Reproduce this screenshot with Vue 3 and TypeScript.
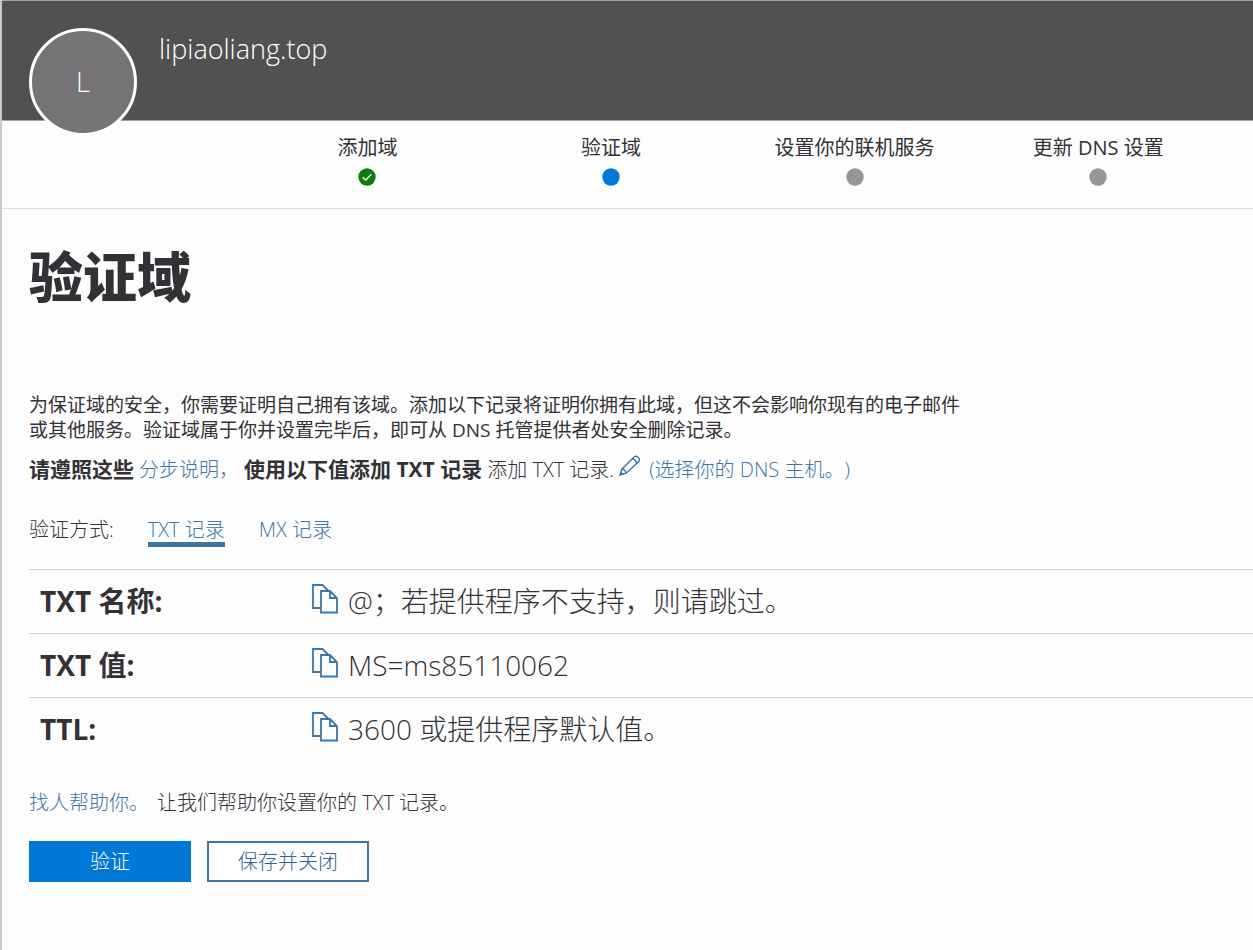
<script setup lang="ts">
import { ref } from 'vue'

interface Step {
  label: string
  state: 'done' | 'current' | 'todo'
}

interface DnsRow {
  label: string
  value: string
}

const steps: Step[] = [
  { label: '添加域', state: 'done' },
  { label: '验证域', state: 'current' },
  { label: '设置你的联机服务', state: 'todo' },
  { label: '更新 DNS 设置', state: 'todo' },
]

const methods = ['TXT 记录', 'MX 记录']
const method = ref(methods[0])

const rows: DnsRow[] = [
  { label: 'TXT 名称:', value: '@；若提供程序不支持，则请跳过。' },
  { label: 'TXT 值:', value: 'MS=ms85110062' },
  { label: 'TTL:', value: '3600 或提供程序默认值。' },
]

function copy(value: string) {
  navigator.clipboard?.writeText(value)
}
</script>

<template>
  <div class="page">
    <header class="banner">
      <div class="avatar">L</div>
      <div class="domain">lipiaoliang.top</div>
    </header>

    <ol class="steps">
      <li v-for="step in steps" :key="step.label" class="step">
        <span>{{ step.label }}</span>
        <svg class="dot" :class="step.state" viewBox="0 0 18 18" aria-hidden="true">
          <circle cx="9" cy="9" r="8.7" />
          <path v-if="step.state === 'done'" d="M4.8 9.2 7.7 12 13.4 6.2" />
        </svg>
      </li>
    </ol>

    <main class="content">
      <h1>验证域</h1>

      <p class="intro">
        为保证域的安全，你需要证明自己拥有该域。添加以下记录将证明你拥有此域，但这不会影响你现有的电子邮件或其他服务。验证域属于你并设置完毕后，即可从 DNS 托管提供者处安全删除记录。
      </p>

      <p class="guide">
        <strong>请遵照这些</strong>
        <a href="#steps">分步说明，</a>
        <strong>使用以下值添加 TXT 记录</strong>
        <span>添加 TXT 记录.</span>
        <a href="#host" class="host">
          <svg class="pencil" viewBox="0 0 22 22" aria-hidden="true">
            <path d="M1.2 19.8 3 14 15.4 1.800Q17 .6 18.800 2L19.800 3.100Q21.200 4.800 19.800 6.400L7.200 18.200ZM3 14Q6.400 14.500 7.200 18.200M13.400 3.800Q17 4.600 17.700 8.300" />
            <path class="tip" d="M1.200 19.800 1.900 17.400 3.800 19.100Z" />
          </svg>
          <span>(选择你的 DNS 主机。)</span>
        </a>
      </p>

      <div class="methods">
        <span id="method-label">验证方式:</span>
        <div class="tabs" role="tablist" aria-labelledby="method-label">
          <button
            v-for="item in methods"
            :key="item"
            type="button"
            role="tab"
            class="tab"
            :class="{ active: item === method }"
            :aria-selected="item === method"
            @click="method = item"
          >{{ item }}</button>
        </div>
      </div>

      <table class="records">
        <tbody>
          <tr v-for="row in rows" :key="row.label">
            <th scope="row">{{ row.label }}</th>
            <td>
              <div class="value">
                <button type="button" class="copy" :aria-label="'复制 ' + row.label" @click="copy(row.value)">
                  <svg viewBox="0 0 26 30" aria-hidden="true">
                    <path d="M8 24H1V1H10.500L16 6.500" />
                    <path d="M9 7H18L25 14V28.500H9ZM18 7V14H25" />
                  </svg>
                </button>
                <span>{{ row.value }}</span>
              </div>
            </td>
          </tr>
        </tbody>
      </table>

      <p class="help">
        <a href="#help">找人帮助你。</a>
        <span>让我们帮助你设置你的 TXT 记录。</span>
      </p>

      <div class="actions">
        <button type="button" class="btn primary">验证</button>
        <button type="button" class="btn">保存并关闭</button>
      </div>
    </main>
  </div>
</template>

<style>
body {
  margin: 0;
  background: #fefdfe;
}
</style>

<style scoped>
.page {
  box-sizing: border-box;
  min-height: 100vh;
  border-left: 2px solid #c9c8cb;
  font-family: "Open Sans", "Noto Sans CJK SC", sans-serif;
  font-size: 20px;
  font-weight: 300;
  line-height: 28px;
  text-spacing-trim: space-all;
  color: #333135;
}

a {
  color: #3a76a6;
  text-decoration: none;
}

button {
  font: inherit;
  cursor: pointer;
}

.banner {
  box-sizing: border-box;
  display: flex;
  gap: 22px;
  height: 121px;
  padding: 27px 27px 0;
  border-top: 1px solid #a2a1a3;
  border-bottom: 1px solid #a19fa2;
  background: #525053;
  color: #fff;
}

.avatar {
  box-sizing: border-box;
  display: flex;
  flex: none;
  align-items: center;
  justify-content: center;
  width: 108px;
  height: 108px;
  border: 3px solid #fff;
  border-radius: 50%;
  background: #757376;
  font-size: 27px;
}

.domain {
  font-size: 27px;
  line-height: 42px;
}

.steps {
  display: grid;
  grid-template-columns: repeat(5, 1fr);
  margin: 0;
  padding: 13px 33px 22px 0;
  border-bottom: 1px solid #e0dfe2;
  list-style: none;
  font-weight: 400;
}

.step {
  display: flex;
  flex-direction: column;
  align-items: center;
  gap: 6px;
  white-space: nowrap;
}

.step:first-child {
  grid-column-start: 2;
}

.dot {
  width: 18px;
  height: 18px;
  fill: #979598;
}

.dot.done {
  fill: #107c10;
}

.dot.current {
  fill: #0078d7;
}

.dot path {
  fill: none;
  stroke: #fff;
  stroke-width: 1.3;
}

.content {
  padding: 32px 0 32px 27px;
}

h1 {
  margin: 0 0 80px;
  font-size: 54px;
  font-weight: 800;
  line-height: 72px;
}

p {
  margin: 0;
}

.intro {
  max-width: 940px;
  font-size: 19px;
  font-weight: 400;
  line-height: 25px;
}

.guide {
  display: flex;
  flex-wrap: wrap;
  align-items: baseline;
  gap: 5px;
  margin-top: 12px;
}

.guide strong {
  font-size: 21px;
  font-weight: 700;
}

.host {
  display: flex;
  align-items: baseline;
  gap: 8px;
}

.pencil {
  width: 22px;
  height: 22px;
  fill: none;
  stroke: #3a76a6;
  stroke-width: 1.4;
}

.pencil .tip {
  fill: #3a76a6;
}

.methods {
  display: flex;
  align-items: baseline;
  gap: 34px;
  margin-top: 32px;
}

.tabs {
  display: flex;
  gap: 34px;
}

.tab {
  padding: 0;
  border: 0;
  border-bottom: 5px solid transparent;
  background: none;
  color: #3a76a6;
  line-height: 24px;
}

.tab.active {
  border-bottom-color: #3a76a6;
}

.records {
  width: 100%;
  margin-top: 22px;
  border-collapse: collapse;
  font-size: 28px;
  line-height: 39px;
}

.records tr {
  border-top: 1px solid #d2d1d4;
}

.records th {
  width: 272px;
  padding: 12px 0 12px 11px;
  font-weight: 700;
  text-align: left;
}

.records td {
  padding: 12px 0;
}

.value {
  display: flex;
  align-items: center;
  gap: 10px;
}

.copy {
  display: block;
  width: 26px;
  height: 36px;
  padding: 0 0 6px;
  border: 0;
  background: none;
}

.copy svg {
  display: block;
  width: 26px;
  height: 30px;
  fill: none;
  stroke: #3a76a6;
  stroke-width: 1.8;
}

.help {
  display: flex;
  gap: 8px;
  margin-top: 28px;
}

.actions {
  display: flex;
  gap: 16px;
  margin-top: 24px;
}

.btn {
  box-sizing: border-box;
  min-width: 162px;
  height: 41px;
  padding: 0 28px;
  border: 2px solid #3f75a5;
  background: #fff;
  color: #2e6498;
}

.btn.primary {
  border-color: #0078d7;
  background: #0078d7;
  color: #fff;
}
</style>
